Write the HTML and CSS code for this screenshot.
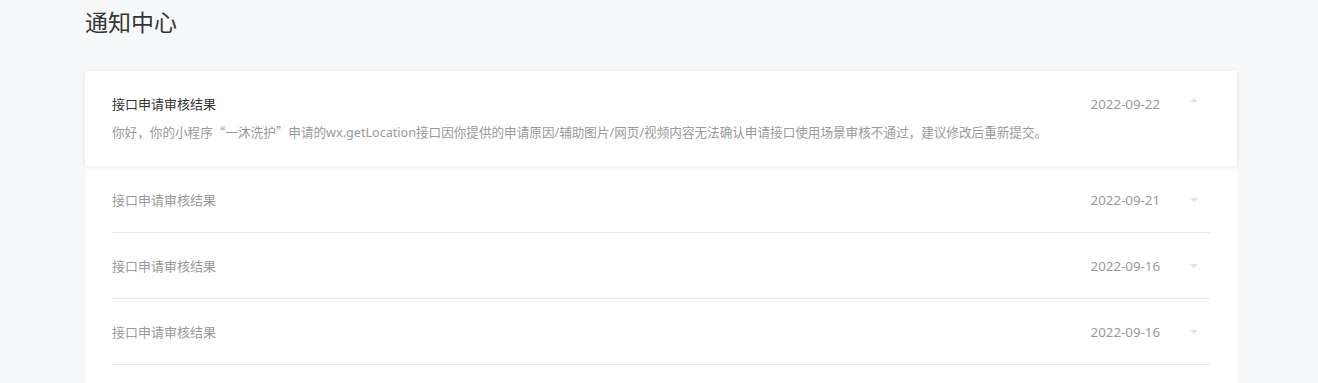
FILE: index.html
```html
<!DOCTYPE html>
<html lang="zh-CN">

<head>
    <meta charset="UTF-8">
    <meta name="viewport" content="width=device-width, initial-scale=1.0">
    <title>通知中心</title>
    <link rel="stylesheet" href="styles.css">
</head>

<body>
    <div class="page">
        <div class="title">通知中心</div>
        <div class="panel">
            <div class="item open">
                <div class="head">
                    <span class="name">接口申请审核结果</span>
                    <span class="date">2022-09-22</span>
                    <span class="arrow up"></span>
                </div>
                <div class="desc">你好，你的小程序<span class="cjk">“</span>一沐洗护<span class="cjk">”</span>申请的wx.getLocation接口因你提供的申请原因/辅助图片/网页/视频内容无法确认申请接口使用场景审核不通过，建议修改后重新提交。</div>
            </div>
            <div class="item">
                <div class="head">
                    <span class="name">接口申请审核结果</span>
                    <span class="date">2022-09-21</span>
                    <span class="arrow"></span>
                </div>
            </div>
            <div class="item">
                <div class="head">
                    <span class="name">接口申请审核结果</span>
                    <span class="date">2022-09-16</span>
                    <span class="arrow"></span>
                </div>
            </div>
            <div class="item">
                <div class="head">
                    <span class="name">接口申请审核结果</span>
                    <span class="date">2022-09-16</span>
                    <span class="arrow"></span>
                </div>
            </div>
        </div>
    </div>
</body>

</html>
```

FILE: styles.css
```css
body {
    margin: 0;
    padding: 0;
    background: #f7f8fa;
    font-family: "Noto Sans", "Noto Sans CJK SC", sans-serif;
    color: #353535;
}

.page {
    width: 1152px;
    margin-left: 85px;
}

.title {
    font-size: 23px;
    line-height: 30px;
    padding-top: 7px;
    height: 64px;
    color: #353535;
}

.panel {
    background: #fff;
    padding-bottom: 20px;
}

.item {
    padding: 0 27px;
}

.item .head {
    display: flex;
    align-items: center;
    padding: 23px 0 22px;
    border-bottom: 1px solid #e7e7e7;
    line-height: 20px;
}

.item.open {
    box-shadow: 0 1px 6px rgba(0, 0, 0, .08);
    position: relative;
    padding-bottom: 23px;
    margin-bottom: 1px;
}

.item.open .head {
    border-bottom: none;
    padding: 23px 0 0;
}

.name {
    flex: 1;
    font-size: 13px;
    color: #9a9a9a;
}

.open .name {
    color: #353535;
}

.date {
    font-size: 13.3px;
    color: #9a9a9a;
}

.arrow {
    width: 0;
    height: 0;
    margin: 0 12px 0 30px;
    border-left: 4px solid transparent;
    border-right: 4px solid transparent;
    border-top: 4px solid #e2e2e2;
}

.arrow.up {
    border-top: none;
    border-bottom: 4px solid #e2e2e2;
    margin-top: -8px;
}

.desc {
    margin-top: 8px;
    font-size: 12.6px;
    line-height: 20px;
    color: #9a9a9a;
}

.cjk {
    font-family: "Noto Sans CJK SC", sans-serif;
}
```
